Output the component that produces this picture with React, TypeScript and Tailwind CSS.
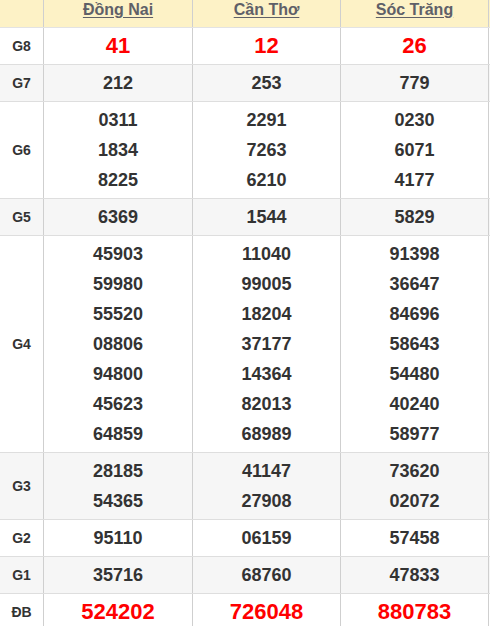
const provinces = ["Đồng Nai", "Cần Thơ", "Sóc Trăng"];

const rows: { label: string; values: string[][]; big?: boolean }[] = [
  { label: "G8", values: [["41"], ["12"], ["26"]], big: true },
  { label: "G7", values: [["212"], ["253"], ["779"]] },
  {
    label: "G6",
    values: [
      ["0311", "1834", "8225"],
      ["2291", "7263", "6210"],
      ["0230", "6071", "4177"],
    ],
  },
  { label: "G5", values: [["6369"], ["1544"], ["5829"]] },
  {
    label: "G4",
    values: [
      ["45903", "59980", "55520", "08806", "94800", "45623", "64859"],
      ["11040", "99005", "18204", "37177", "14364", "82013", "68989"],
      ["91398", "36647", "84696", "58643", "54480", "40240", "58977"],
    ],
  },
  {
    label: "G3",
    values: [
      ["28185", "54365"],
      ["41147", "27908"],
      ["73620", "02072"],
    ],
  },
  { label: "G2", values: [["95110"], ["06159"], ["57458"]] },
  { label: "G1", values: [["35716"], ["68760"], ["47833"]] },
  { label: "ĐB", values: [["524202"], ["726048"], ["880783"]], big: true },
];

const cols = "grid grid-cols-[44px_149px_148px_148px]";

export default function App() {
  return (
    <div className="w-[490px] bg-white font-['Liberation_Sans',Arial,sans-serif]">
      {/* Header */}
      <div className={`${cols} h-[28px] bg-[#fdf2c6] border-b border-[#e3e3e3]`}>
        <div className="border-r border-[#cfcfcf]" />
        {provinces.map((p) => (
          <div
            key={p}
            className="border-r border-[#cfcfcf] flex items-start justify-center leading-[20px] text-[16px] font-bold text-[#5f6068] underline underline-offset-2"
          >
            {p}
          </div>
        ))}
      </div>

      {rows.map((row, i) => (
        <div
          key={row.label}
          className={`${cols} border-b border-[#dedede] ${i % 2 === 1 ? "bg-[#f6f6f6]" : "bg-white"}`}
        >
          <div className="border-r border-[#cfcfcf] flex items-center justify-center text-[14px] font-bold text-[#333]">
            {row.label}
          </div>
          {row.values.map((vals, j) => (
            <div key={j} className="border-r border-[#cfcfcf] py-[3px] flex flex-col items-center">
              {vals.map((v) => (
                <div
                  key={v}
                  className={
                    row.big
                      ? "h-[30px] leading-[30px] text-[22px] font-bold text-[#ff0000]"
                      : "h-[30px] leading-[30px] text-[18px] font-bold text-[#333]"
                  }
                >
                  {v}
                </div>
              ))}
            </div>
          ))}
        </div>
      ))}
    </div>
  );
}
